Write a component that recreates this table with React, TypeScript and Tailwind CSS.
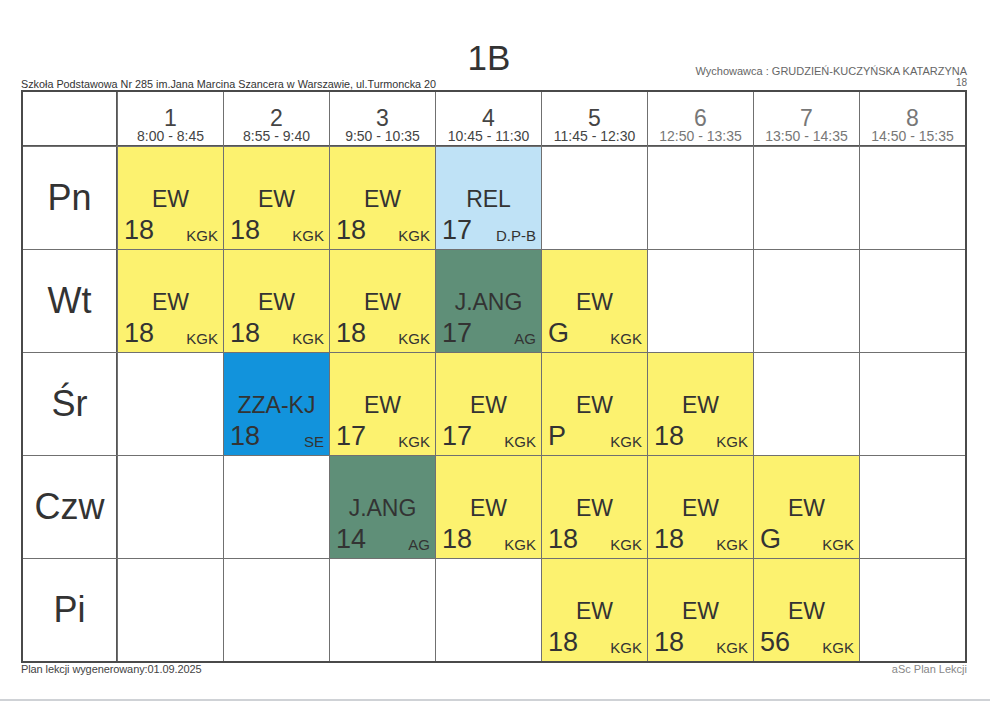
import React from "react";

type Lesson = { subject: string; room: string; teacher: string; color: "yellow" | "lightblue" | "green" | "blue" };

const periods = [
  { n: 1, time: "8:00 - 8:45" },
  { n: 2, time: "8:55 - 9:40" },
  { n: 3, time: "9:50 - 10:35" },
  { n: 4, time: "10:45 - 11:30" },
  { n: 5, time: "11:45 - 12:30" },
  { n: 6, time: "12:50 - 13:35" },
  { n: 7, time: "13:50 - 14:35" },
  { n: 8, time: "14:50 - 15:35" },
];

const ew = (room: string): Lesson => ({ subject: "EW", room, teacher: "KGK", color: "yellow" });

const days: { name: string; lessons: (Lesson | null)[] }[] = [
  {
    name: "Pn",
    lessons: [ew("18"), ew("18"), ew("18"), { subject: "REL", room: "17", teacher: "D.P-B", color: "lightblue" }, null, null, null, null],
  },
  {
    name: "Wt",
    lessons: [ew("18"), ew("18"), ew("18"), { subject: "J.ANG", room: "17", teacher: "AG", color: "green" }, ew("G"), null, null, null],
  },
  {
    name: "Śr",
    lessons: [null, { subject: "ZZA-KJ", room: "18", teacher: "SE", color: "blue" }, ew("17"), ew("17"), ew("P"), ew("18"), null, null],
  },
  {
    name: "Czw",
    lessons: [null, null, { subject: "J.ANG", room: "14", teacher: "AG", color: "green" }, ew("18"), ew("18"), ew("18"), ew("G"), null],
  },
  {
    name: "Pi",
    lessons: [null, null, null, null, ew("18"), ew("18"), ew("56"), null],
  },
];

const bg = {
  yellow: "bg-[#fcf26f]",
  lightblue: "bg-[#bfe2f6]",
  green: "bg-[#5f8f78]",
  blue: "bg-[#1293dc]",
};

function LessonCell({ lesson }: { lesson: Lesson | null }) {
  if (!lesson) return <div className="bg-white" />;
  return (
    <div className={`${bg[lesson.color]} flex flex-col justify-end pb-[5px] text-[#333]`}>
      <div className="text-center text-[23px] leading-[24px]">{lesson.subject}</div>
      <div className="mt-[5px] flex items-baseline justify-between pl-[6px] pr-[5px]">
        <span className="text-[27px] leading-[28px]">{lesson.room}</span>
        <span className="relative top-[2px] text-[15px] leading-[16px]">{lesson.teacher}</span>
      </div>
    </div>
  );
}

export default function App() {
  return (
    <div className="w-[1000px] h-[707px] bg-white overflow-hidden font-['Liberation_Sans',Arial,sans-serif]">
      <div className="px-[21px] pt-[41px] w-[988px]">
        <div className="pr-[10px] text-center text-[35px] leading-[34px] text-[#333]">1B</div>
        <div className="-mt-[10px] flex h-[25px] justify-between">
          <div className="self-end text-[10.8px] leading-[12px] text-[#333]">
            Szkoła Podstawowa Nr 285 im.Jana Marcina Szancera w Warszawie, ul.Turmoncka 20
          </div>
          <div className="self-start text-right text-[#666]">
            <div className="text-[11px] leading-[12px]">Wychowawca : GRUDZIEŃ-KUCZYŃSKA KATARZYNA</div>
            <div className="text-[10px] leading-[11px]">18</div>
          </div>
        </div>

        <div className="grid grid-cols-[94px_repeat(8,105px)] grid-rows-[54px_repeat(5,102px)] gap-px border-2 border-[#4a4a4a] bg-[#707070]">
          <div className="bg-white border-b border-r border-[#555]" />
          {periods.map((p) => (
            <div
              key={p.n}
              className={`bg-white border-b border-[#555] flex flex-col items-center justify-end pb-[2px] ${
                p.n <= 5 ? "text-[#444]" : "text-[#777]"
              }`}
            >
              <div className="text-[23px] leading-[22px]">{p.n}</div>
              <div className="text-[14px] leading-[14px]">{p.time}</div>
            </div>
          ))}
          {days.map((d) => (
            <React.Fragment key={d.name}>
              <div className="bg-white border-r border-[#555] flex items-center justify-center text-[36px] text-[#333]">
                {d.name}
              </div>
              {d.lessons.map((l, i) => (
                <LessonCell key={i} lesson={l} />
              ))}
            </React.Fragment>
          ))}
        </div>

        <div className="flex justify-between text-[11px] leading-[12px]">
          <span className="tracking-[-0.1px] text-[#444]">Plan lekcji wygenerowany:01.09.2025</span>
          <span className="text-[#888]">aSc Plan Lekcji</span>
        </div>
      </div>
      <div className="mt-[24px] h-[2px] w-[990px] bg-[#cfd2d6]" />
    </div>
  );
}
